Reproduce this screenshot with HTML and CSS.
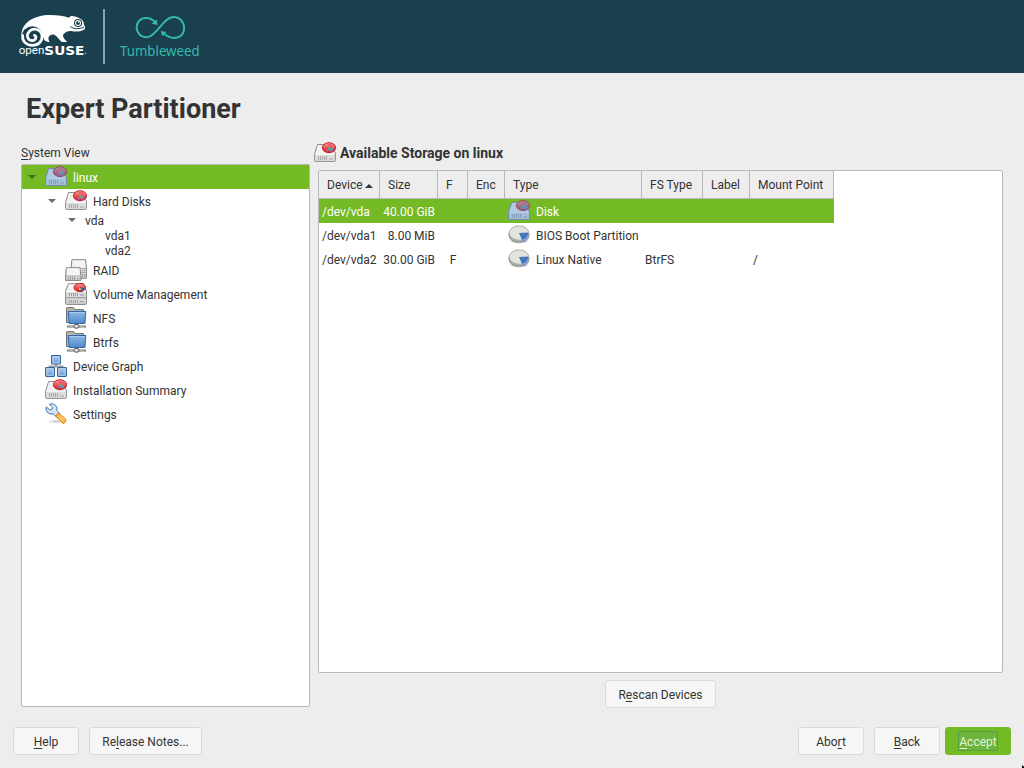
FILE: index.html
```html
<!DOCTYPE html>
<html lang="en">
<head>
<meta charset="utf-8">
<title>Expert Partitioner</title>
<link rel="stylesheet" href="styles.css">
</head>
<body>
<svg class="defs" width="0" height="0" aria-hidden="true">
  <defs>
    <linearGradient id="g-metal" x1="0" y1="0" x2="0" y2="1"><stop offset="0" stop-color="#fdfdfd"/><stop offset="1" stop-color="#cfcfcf"/></linearGradient>
    <linearGradient id="g-red" x1="0" y1="0" x2="0" y2="1"><stop offset="0" stop-color="#f7a0a0"/><stop offset=".6" stop-color="#e64545"/><stop offset="1" stop-color="#e02020"/></linearGradient>
    <linearGradient id="g-blue" x1="0" y1="0" x2="0" y2="1"><stop offset="0" stop-color="#8fb8e6"/><stop offset="1" stop-color="#5089cc"/></linearGradient>
    <linearGradient id="g-pc" x1="0" y1="0" x2="0" y2="1"><stop offset="0" stop-color="#b4cfee"/><stop offset="1" stop-color="#6295d0"/></linearGradient>
    <radialGradient id="g-shadow"><stop offset="0" stop-color="#555" stop-opacity=".6"/><stop offset="1" stop-color="#555" stop-opacity="0"/></radialGradient>
    <symbol id="disk" viewBox="0 0 22 22">
      <path d="M3.6 2.5H18.5L21.4 12V18.5Q21.4 19.4 20.5 19.4H1.5Q.6 19.4.6 18.5V12Z" fill="url(#g-metal)" stroke="#8b8b8b"/>
      <path d="M4.4 3.5H17.8L20.3 11.6H1.7Z" fill="#f1f1f1"/>
      <path d="M1.2 12.2H20.8V18.8H1.2Z" fill="#dedede"/>
      <path d="M1.2 12.2H20.8" stroke="#fff"/>
      <path d="M4.5 14V18M6.5 14V18M8.5 14V18M10.5 14V18M12.5 14V18" stroke="#a8a8a8"/>
      <path d="M15 17H19" stroke="#aaa"/>
      <ellipse cx="15" cy="5.7" rx="6.6" ry="5" fill="url(#g-red)" stroke="#c61c22"/>
      <path d="M14 5.5V1.8Q19.5 2 20 5.5Z" fill="#ee5f66"/>
      <path d="M14.8 5.6L19.8 6.6Q19 9.2 16.5 9.8Z" fill="#5a8fda"/>
      <path d="M14 4.2L17.6 6.8L14.3 8Z" fill="#70ad68"/>
      <path d="M12 6L15 8.5L13.4 9.7Z" fill="#8a80c8"/>
    </symbol>
    <symbol id="disk-selected" viewBox="0 0 22 22">
      <use href="#disk" width="22" height="22"/>
      <g fill="#4a90d0" fill-opacity=".4"><path d="M3.2 2H8.6Q7.8 4 8.1 7Q10 11.2 15 11.2Q19 11 20.8 8.8L22 12V18.5Q22 20 20.5 20H1.5Q0 20 0 18.5V12Z"/><ellipse cx="15" cy="5.7" rx="7.1" ry="5.5"/></g>
    </symbol>
    <symbol id="raid" viewBox="0 0 22 22">
      <path d="M6.9.7H20.5L21.4 9V19.3H6.2V9Z" fill="url(#g-metal)" stroke="#858585"/>
      <path d="M8 2H19.6L20.2 8.5H7.5Z" fill="#f3f3f3"/>
      <path d="M7 9.5H21M7 13.5H21" stroke="#aaa"/><path d="M17.5 10.5V12.5M19.5 10.5V12.5M17.5 15V18M19.5 15V18" stroke="#999"/>
      <path d="M1.3 8.7H15L15.9 17V21.4H.6V17Z" fill="url(#g-metal)" stroke="#858585"/>
      <path d="M2.3 9.8H14.2L14.8 16.5H1.8Z" fill="#f5f5f5"/>
      <path d="M1 17.1H15.5" stroke="#aaa"/><path d="M3.5 18V20.7M5.5 18V20.7M7.5 18V20.7M9.5 18V20.7" stroke="#999"/><path d="M12 19.5H14.5" stroke="#999"/>
    </symbol>
    <symbol id="volume" viewBox="0 0 22 22">
      <path d="M3.5.7H18.5L21.4 8V20.7Q21.4 21.4 20.5 21.4H1.5Q.6 21.4.6 20.5V8Z" fill="url(#g-metal)" stroke="#858585"/>
      <path d="M1 8.5H21V14H1Z" fill="#dadada"/><path d="M1 8.5H21" stroke="#fff"/><path d="M1 14.8H21" stroke="#8c8c8c"/>
      <path d="M4.5 10V13M6.5 10V13M8.5 10V13M10.5 10V13M12.5 10V13M4.5 17V20M6.5 17V20M8.5 17V20M10.5 17V20M12.5 17V20" stroke="#a0a0a0"/><path d="M15 12H19M15 18.5H19" stroke="#999"/>
      <ellipse cx="14.8" cy="4.5" rx="5.7" ry="4.1" fill="url(#g-red)" stroke="#c0181e"/>
      <path d="M14.5 4.2L20 5.2Q19 8.2 15.8 8.4Z" fill="#295bb1"/><path d="M14 4.5L17.2 6.3L14.3 7.1Z" fill="#f4ce35"/>
    </symbol>
    <symbol id="netfolder" viewBox="0 0 22 22">
      <path d="M1.5 15.5V1.2Q1.5.6 2.2.6H8.5L9.8 2.6H18.5V15.5Z" fill="#b4b6b2" stroke="#6e706c"/>
      <path d="M2.5 4.6H18M2.5 6.6H18" stroke="#8c8e89"/>
      <path d="M3.4 4.5H20.8L19.9 16.5H4.1Z" fill="url(#g-blue)" stroke="#2f64a6"/>
      <path d="M4.4 5.5H19.7" stroke="#a9cbf0"/>
      <path d="M11.5 17V19" stroke="#555"/><path d="M2 19.5H21" stroke="#6d6d6d" stroke-width="2"/><path d="M3 19.3H20" stroke="#d0d0d0" stroke-width=".8"/>
      <ellipse cx="11.4" cy="19.3" rx="2.6" ry="2" fill="#ddd" stroke="#555"/>
    </symbol>
    <symbol id="graph" viewBox="0 0 22 22">
      <path d="M11 8V11.5M4.5 14V11.5H17.5V14" fill="none" stroke="#a3a39e" stroke-width="2"/>
      <g fill="url(#g-pc)" stroke="#2f609f" stroke-width="1.2"><rect x="6.6" y=".6" width="8.8" height="8.4" rx=".8"/><rect x=".6" y="12.6" width="8.8" height="8.8" rx=".8"/><rect x="12.6" y="12.6" width="8.8" height="8.8" rx=".8"/></g>
      <g fill="none" stroke="#c9ddf2" stroke-width=".8"><rect x="7.7" y="1.7" width="6.6" height="6.2"/><rect x="1.7" y="13.7" width="6.6" height="6.6"/><rect x="13.7" y="13.7" width="6.6" height="6.6"/></g>
    </symbol>
    <symbol id="settings" viewBox="0 0 22 22">
      <ellipse cx="11" cy="18.5" rx="9" ry="2" fill="url(#g-shadow)" opacity=".6"/>
      <path d="M4.4 1.2Q8-.3 10.7 2.4Q12.6 4.8 11.8 7.6L15 10.8L11.6 14L8.2 10.9Q5 11.7 2.4 9.4Q.2 7 1.2 3.9L4.9 7.1L7 6.4L7.5 4.2Z" fill="#d3e3f6" stroke="#4677b4"/>
      <path d="M10.9 13.2Q11.4 10.7 14 10.4L20.7 16.2Q21.4 19.8 17.9 20.4Z" fill="#fbb63f" stroke="#df7b0c"/>
      <path d="M13.4 13.5L17.8 17.8M15.5 12.6L19.4 16.3" stroke="#ffe1a0"/>
    </symbol>
    <symbol id="partition" viewBox="0 0 22 22">
      <ellipse cx="11.2" cy="16.8" rx="10.5" ry="3" fill="url(#g-shadow)"/>
      <path d="M1 9V11.5Q2 18.2 11 18.3Q20 18.2 21 11.5V9Z" fill="#b1b1ad" stroke="#888"/>
      <ellipse cx="11" cy="9" rx="9.8" ry="7.2" fill="#e3e3de" stroke="#a5a5a0" stroke-width=".8"/>
      <path d="M11 9L20.2 8.5Q20.5 14 14.1 16Z" fill="#4375bd"/><path d="M14 16.1V17.8Q19.8 16.5 20.7 12V9Q20 14.8 14 16.1Z" fill="#7ba6da"/>
    </symbol>
  </defs>
</svg>

<header class="banner">
  <svg class="logo" width="220" height="73" viewBox="0 0 660 219" role="img" aria-label="openSUSE Tumbleweed">
    <path d="M64 108C64 68 101 45 151 45C174 45 193 48 206 53C211 47 219 47 227 50C241 53 253 63 252 74C256 80 257 85 252 89C241 94 227 97 215 93C205 92 197 95 190 103C187 111 193 118 202 126Q192 127 184 125C176 117 171 107 163 104C153 101 147 108 145 113Q145 120 149 127Q138 126 133 121L128 105L98 80L72 90Z" fill="#fff"/>
    <circle cx="97" cy="110" r="31" fill="#1a4050"/>
    <path d="M68 106C66 124 79 136 97 136C116 136 128 123 126 106C123 88 99 82 88 94C77 106 83 121 96 122C107 122 112 110 103 106" fill="none" stroke="#fff" stroke-width="8" stroke-linecap="round"/>
    <circle cx="234" cy="69" r="12" fill="#1a4050"/><circle cx="234" cy="69" r="9" fill="#fff"/><circle cx="234" cy="69" r="6" fill="#1a4050"/><ellipse cx="236" cy="66" rx="3" ry="2" fill="#fff"/>
    <path d="M211 80Q227 91 252 82" fill="none" stroke="#1a4050" stroke-width="3"/>
    <text class="logo-open" x="56" y="163" textLength="77" lengthAdjust="spacingAndGlyphs">open</text>
    <text class="logo-suse" x="133" y="164" textLength="120" lengthAdjust="spacingAndGlyphs">SUSE</text>
    <circle cx="257" cy="160" r="2" fill="#fff"/>
    <path d="M312 27V192" stroke="#a4b3ba" stroke-width="5"/>
    <path d="M465 66C449 49 425 50 414 67C405 84 412 103 429 110C447 116 459 104 471 91L492 67C505 52 526 44 542 59C557 75 555 99 540 109C523 119 503 112 492 101" fill="none" stroke="#35b9ab" stroke-width="6"/>
    <path d="M473 75L470 58L455 71ZM482 93L499 96L487 109Z" fill="#35b9ab"/>
    <text class="logo-tw" x="360" y="167" textLength="239" lengthAdjust="spacingAndGlyphs">Tumbleweed</text>
  </svg>
</header>

<main class="page">
  <h1 class="title">Expert Partitioner</h1>
  <div class="columns">
    <section class="side">
      <div class="side-label"><u>S</u>ystem View</div>
      <ul class="tree">
        <li class="node selected"><i class="arrow"></i><svg class="icon"><use href="#disk-selected"/></svg>linux</li>
        <li class="node l1"><i class="arrow"></i><svg class="icon"><use href="#disk"/></svg>Hard Disks</li>
        <li class="node short l2"><i class="arrow"></i>vda</li>
        <li class="node short l3">vda1</li>
        <li class="node short l3">vda2</li>
        <li class="node leaf1"><svg class="icon"><use href="#raid"/></svg>RAID</li>
        <li class="node leaf1"><svg class="icon"><use href="#volume"/></svg>Volume Management</li>
        <li class="node leaf1"><svg class="icon"><use href="#netfolder"/></svg>NFS</li>
        <li class="node leaf1"><svg class="icon"><use href="#netfolder"/></svg>Btrfs</li>
        <li class="node leaf0"><svg class="icon"><use href="#graph"/></svg>Device Graph</li>
        <li class="node leaf0"><svg class="icon"><use href="#disk"/></svg>Installation Summary</li>
        <li class="node leaf0"><svg class="icon"><use href="#settings"/></svg>Settings</li>
      </ul>
    </section>
    <section class="content">
      <h2 class="heading"><svg class="icon"><use href="#disk"/></svg>Available Storage on linux</h2>
      <div class="table-box">
        <div class="row head">
          <span>Device<i class="sort"></i></span><span>Size</span><span>F</span><span>Enc</span><span>Type</span><span>FS Type</span><span>Label</span><span>Mount Point</span>
        </div>
        <div class="row selected">
          <span>/dev/vda</span><span class="num">40.00 GiB</span><span></span><span></span><span><svg class="icon"><use href="#disk-selected"/></svg>Disk</span><span></span><span></span><span></span>
        </div>
        <div class="row">
          <span>/dev/vda1</span><span class="num">8.00 MiB</span><span></span><span></span><span><svg class="icon"><use href="#partition"/></svg>BIOS Boot Partition</span><span></span><span></span><span></span>
        </div>
        <div class="row">
          <span>/dev/vda2</span><span class="num">30.00 GiB</span><span class="mid">F</span><span></span><span><svg class="icon"><use href="#partition"/></svg>Linux Native</span><span>BtrFS</span><span></span><span>/</span>
        </div>
      </div>
      <button class="btn rescan"><span>R<u>e</u>scan Devices</span></button>
    </section>
  </div>
  <footer class="footer">
    <button class="btn"><span><u>H</u>elp</span></button>
    <button class="btn notes"><span>Re<u>l</u>ease Notes...</span></button>
    <button class="btn abort"><span>Abo<u>r</u>t</span></button>
    <button class="btn"><span><u>B</u>ack</span></button>
    <button class="btn primary"><span><u>A</u>ccept</span></button>
  </footer>
</main>
<i class="cursor"></i>
</body>
</html>
```

FILE: styles.css
```css
* { box-sizing: border-box; }
body {
  margin: 0;
  width: 1024px;
  height: 768px;
  overflow: hidden;
  position: relative;
  display: flex;
  flex-direction: column;
  background: #ededed;
  color: #333;
  font: 12px/14px Roboto, sans-serif;
}
.defs { position: absolute; }
u { text-decoration: underline; text-decoration-thickness: 1px; text-underline-offset: 2px; text-decoration-skip-ink: none; }

.banner { height: 73px; flex: none; background: #1a4050; }
.logo { display: block; }
.logo-open { font: 33px Roboto, sans-serif; fill: #fff; }
.logo-suse { font: bold 39px "DejaVu Sans", sans-serif; fill: #fff; }
.logo-tw { font: 42px "Noto Sans", sans-serif; fill: #35b9ab; }

.page { flex: 1; display: flex; flex-direction: column; }
.title { margin: 0; padding: 20px 0 0 26px; height: 67px; font-size: 27px; line-height: 32px; font-weight: 700; }
.columns { display: flex; padding-left: 21px; height: 568px; }
.side { width: 289px; }
.side-label { height: 24px; padding-top: 6px; }
.tree {
  margin: 0;
  padding: 0;
  height: 543px;
  list-style: none;
  background: #fff;
  border: 1px solid #b8b8b8;
  border-radius: 2px;
}
.node { display: flex; align-items: center; height: 24px; padding: 2px 0 0 5px; }
.icon { width: 22px; height: 22px; flex: none; }
.node .icon, .row .icon { margin: -2px 6px 0 0; }
.node.short { height: 15px; padding-top: 0; }
.l1 { padding-left: 25px; }
.l2 { padding-left: 45px; }
.l3 { padding-left: 83px; }
.leaf0 { padding-left: 23px; }
.leaf1 { padding-left: 43px; }
.arrow { width: 18px; height: 5px; flex: none; }
.arrow::before { content: ""; display: block; width: 0; border: 4px solid transparent; border-top: 4.5px solid #6e6e6e; border-bottom: 0; margin-left: 1px; }
.node:not(.short) .arrow { margin-top: -2px; }
.selected { background: #73ba25; color: #fff; }
.selected .arrow::before { border-top-color: #3f6b17; }

.content { margin-left: 4px; width: 689px; display: flex; flex-direction: column; }
.heading { margin: 0; height: 30px; display: flex; align-items: center; gap: 4px; padding-bottom: 4px; font-size: 14px; font-weight: 700; }
.heading .icon { margin-top: -1px; }
.table-box { margin-left: 4px; height: 503px; background: #fff; border: 1px solid #b8b8b8; border-radius: 2px; }
.row { display: grid; grid-template-columns: 61px 58px 30px 37px 137px 61px 47px 84px; width: 515px; height: 24px; }
.row span { display: flex; align-items: center; padding: 2px 3px 0; white-space: nowrap; }
.row .num { justify-content: flex-end; }
.row .mid { justify-content: center; }
.row.head { height: 28px; background: #ededed; }
.head span { padding: 0 8px; border-right: 1px solid #b8b8b8; border-bottom: 1px solid #b8b8b8; }
.sort { margin: 2px 0 0 2px; border: 4px solid transparent; border-bottom: 4px solid #333; border-top: 0; }

.btn {
  width: 66px;
  height: 28px;
  padding: 2px 0 0;
  background: #f6f6f6;
  border: 1px solid #dadada;
  border-radius: 3px;
  color: #333;
  font: inherit;
}
.rescan { width: 111px; margin: 7px 0 0 291px; }
.footer { display: flex; padding: 19px 13px 0; gap: 10px; }
.notes { width: 113px; }
.abort { margin-left: auto; }
.btn.primary { margin-left: -5px; background: #73ba25; border-color: #73ba25; color: #e6f3d8; padding: 0; }
.primary span { display: inline-block; height: 20px; line-height: 20px; padding: 1px 1px 0; outline: 1px solid #56a044; outline-offset: -1px; border-radius: 1px; background: #6cb43b; }
.cursor { position: absolute; right: 0; bottom: 0; width: 2px; height: 3px; background: #000; clip-path: polygon(0 0, 100% 60%, 100% 100%, 0 100%); }
```
